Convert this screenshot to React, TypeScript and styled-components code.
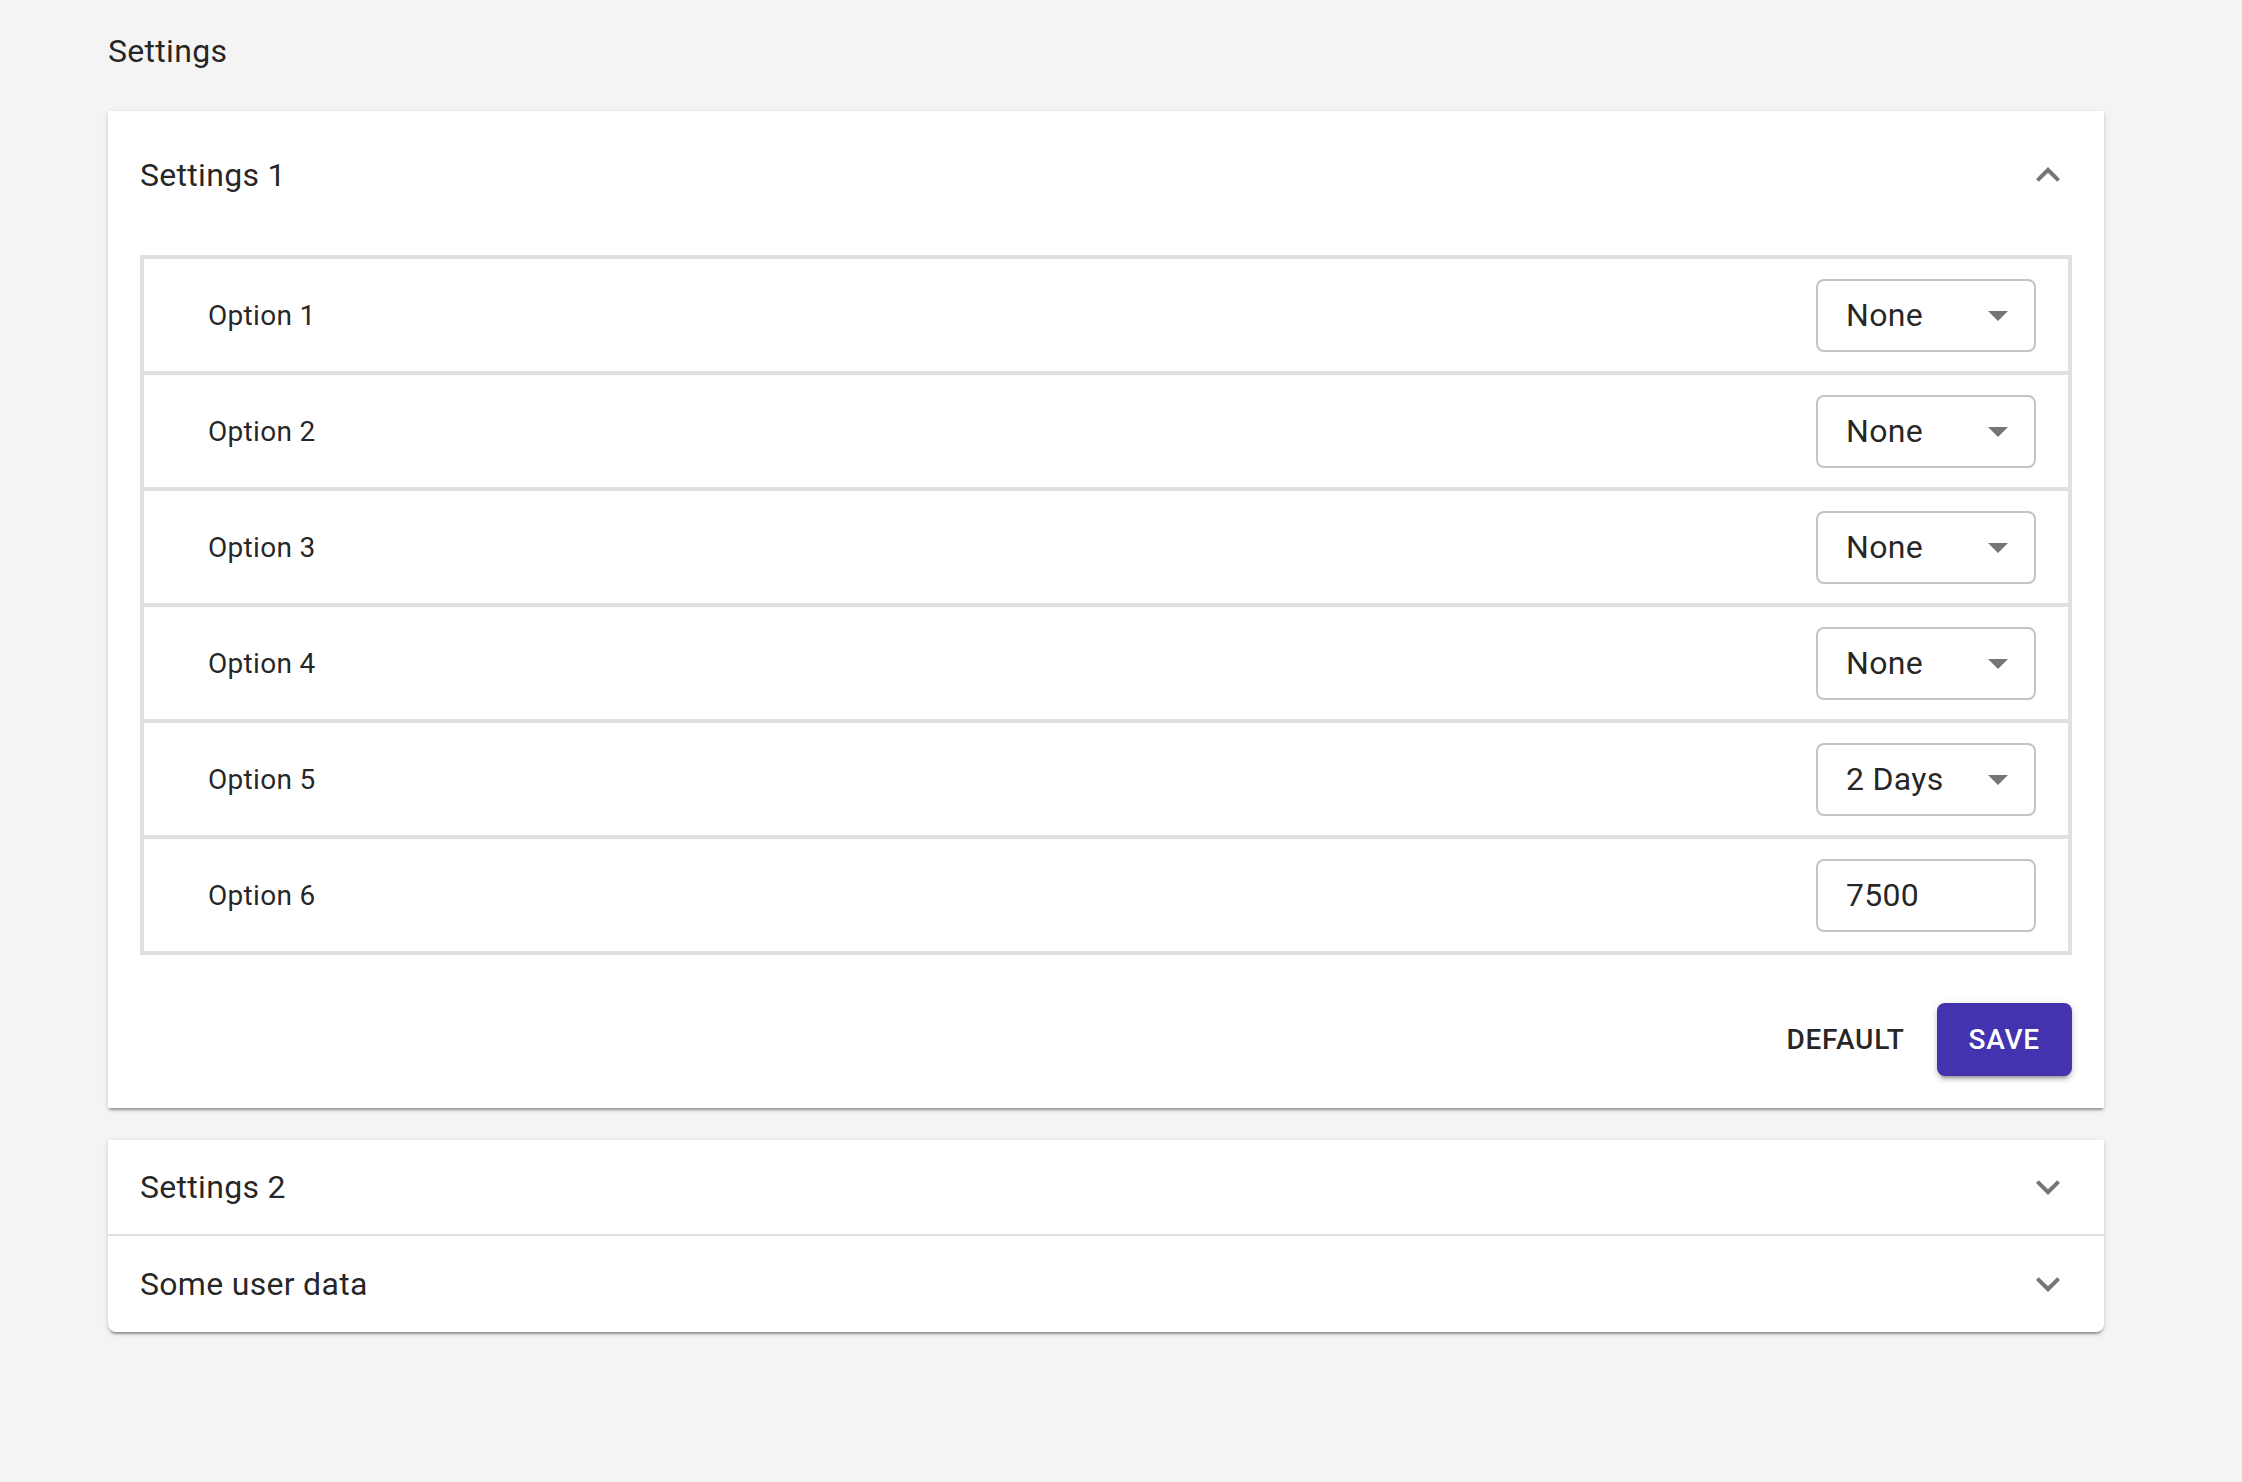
import React from "react";
import styled, { createGlobalStyle } from "styled-components";

type Option = {
  label: string;
  value: string;
  kind: "select" | "input";
};

const OPTIONS: Option[] = [
  { label: "Option 1", value: "None", kind: "select" },
  { label: "Option 2", value: "None", kind: "select" },
  { label: "Option 3", value: "None", kind: "select" },
  { label: "Option 4", value: "None", kind: "select" },
  { label: "Option 5", value: "2 Days", kind: "select" },
  { label: "Option 6", value: "7500", kind: "input" },
];

const GlobalStyle = createGlobalStyle`
  html, body {
    margin: 0;
    padding: 0;
    background: #f4f4f4;
    font-family: Roboto, "Liberation Sans", Arial, sans-serif;
    color: rgba(0, 0, 0, 0.87);
  }
  * {
    box-sizing: border-box;
  }
`;

const ExpandIcon = ({ up }: { up?: boolean }) => (
  <Chevron viewBox="0 0 24 24" $up={up}>
    <path d="M16.59 8.59 12 13.17 7.41 8.59 6 10l6 6 6-6z" />
  </Chevron>
);

const DropIcon = () => (
  <Arrow viewBox="0 0 24 24">
    <path d="M7 10l5 5 5-5z" />
  </Arrow>
);

export default function App() {
  return (
    <>
      <GlobalStyle />
      <Page>
        <Title>Settings</Title>

        <Card>
          <Summary $height={128}>
            <SummaryText>Settings 1</SummaryText>
            <ExpandIcon up />
          </Summary>
          <Details>
            <OptionTable>
              {OPTIONS.map((opt) => (
                <OptionRow key={opt.label}>
                  <OptionLabel>{opt.label}</OptionLabel>
                  {opt.kind === "select" ? (
                    <SelectBox>
                      <span>{opt.value}</span>
                      <DropIcon />
                    </SelectBox>
                  ) : (
                    <TextField defaultValue={opt.value} />
                  )}
                </OptionRow>
              ))}
            </OptionTable>
          </Details>
          <Actions>
            <TextButton>Default</TextButton>
            <SaveButton>Save</SaveButton>
          </Actions>
        </Card>

        <Card $rounded>
          <Summary $height={94}>
            <SummaryText>Settings 2</SummaryText>
            <ExpandIcon />
          </Summary>
          <Summary $height={98} $divided>
            <SummaryText>Some user data</SummaryText>
            <ExpandIcon />
          </Summary>
        </Card>
      </Page>
    </>
  );
}

const Page = styled.div`
  padding: 27px 138px 80px 108px;
`;

const Title = styled.div`
  font-size: 32px;
  line-height: 48px;
  letter-spacing: 0.3px;
  margin-bottom: 36px;
`;

const Card = styled.div<{ $rounded?: boolean }>`
  background: #fff;
  border-radius: ${(p) => (p.$rounded ? "0 0 8px 8px" : "0")};
  box-shadow: 0 4px 2px -2px rgba(0, 0, 0, 0.2), 0 2px 2px 0 rgba(0, 0, 0, 0.14),
    0 2px 6px 0 rgba(0, 0, 0, 0.12);
  & + & {
    margin-top: 32px;
  }
`;

const Summary = styled.div<{ $height: number; $divided?: boolean }>`
  display: flex;
  align-items: center;
  justify-content: space-between;
  height: ${(p) => p.$height}px;
  padding: 0 32px;
  border-top: ${(p) => (p.$divided ? "2px solid #e0e0e0" : "none")};
`;

const SummaryText = styled.div`
  font-size: 32px;
  line-height: 48px;
  letter-spacing: 0.3px;
`;

const Chevron = styled.svg<{ $up?: boolean }>`
  width: 48px;
  height: 48px;
  fill: rgba(0, 0, 0, 0.54);
  transform: ${(p) => (p.$up ? "rotate(180deg)" : "none")};
`;

const Details = styled.div`
  padding: 16px 32px 0;
`;

const OptionTable = styled.div`
  border: 4px solid #e0e0e0;
  border-bottom: none;
`;

const OptionRow = styled.div`
  display: flex;
  align-items: center;
  justify-content: space-between;
  height: 116px;
  padding: 0 32px 0 64px;
  border-bottom: 4px solid #e0e0e0;
`;

const OptionLabel = styled.div`
  font-size: 28px;
  letter-spacing: 0.3px;
  color: rgba(0, 0, 0, 0.87);
`;

const SelectBox = styled.div`
  position: relative;
  display: flex;
  align-items: center;
  width: 220px;
  height: 73px;
  padding-left: 28px;
  border: 2px solid #c4c4c4;
  border-radius: 8px;
  font-size: 32px;
  letter-spacing: 0.3px;
  color: rgba(0, 0, 0, 0.87);
`;

const Arrow = styled.svg`
  position: absolute;
  right: 12px;
  top: 50%;
  width: 48px;
  height: 48px;
  margin-top: -24px;
  fill: rgba(0, 0, 0, 0.54);
`;

const TextField = styled.input`
  width: 220px;
  height: 73px;
  padding: 0 28px;
  border: 2px solid #c4c4c4;
  border-radius: 8px;
  font-family: Roboto, "Liberation Sans", Arial, sans-serif;
  font-size: 32px;
  letter-spacing: 0.3px;
  color: rgba(0, 0, 0, 0.87);
  background: #fff;
  outline: none;
`;

const Actions = styled.div`
  display: flex;
  justify-content: flex-end;
  align-items: center;
  gap: 16px;
  padding: 48px 32px 32px;
`;

const ButtonBase = styled.button`
  height: 73px;
  border: none;
  border-radius: 8px;
  font-family: Roboto, "Liberation Sans", Arial, sans-serif;
  font-size: 28px;
  font-weight: 500;
  letter-spacing: 0.8px;
  text-transform: uppercase;
  cursor: pointer;
`;

const TextButton = styled(ButtonBase)`
  padding: 0 16px;
  background: transparent;
  color: rgba(0, 0, 0, 0.87);
`;

const SaveButton = styled(ButtonBase)`
  padding: 0 32px;
  background: #4433af;
  color: #fff;
  box-shadow: 0 6px 2px -4px rgba(0, 0, 0, 0.2), 0 4px 4px 0 rgba(0, 0, 0, 0.14),
    0 2px 10px 0 rgba(0, 0, 0, 0.12);
`;
